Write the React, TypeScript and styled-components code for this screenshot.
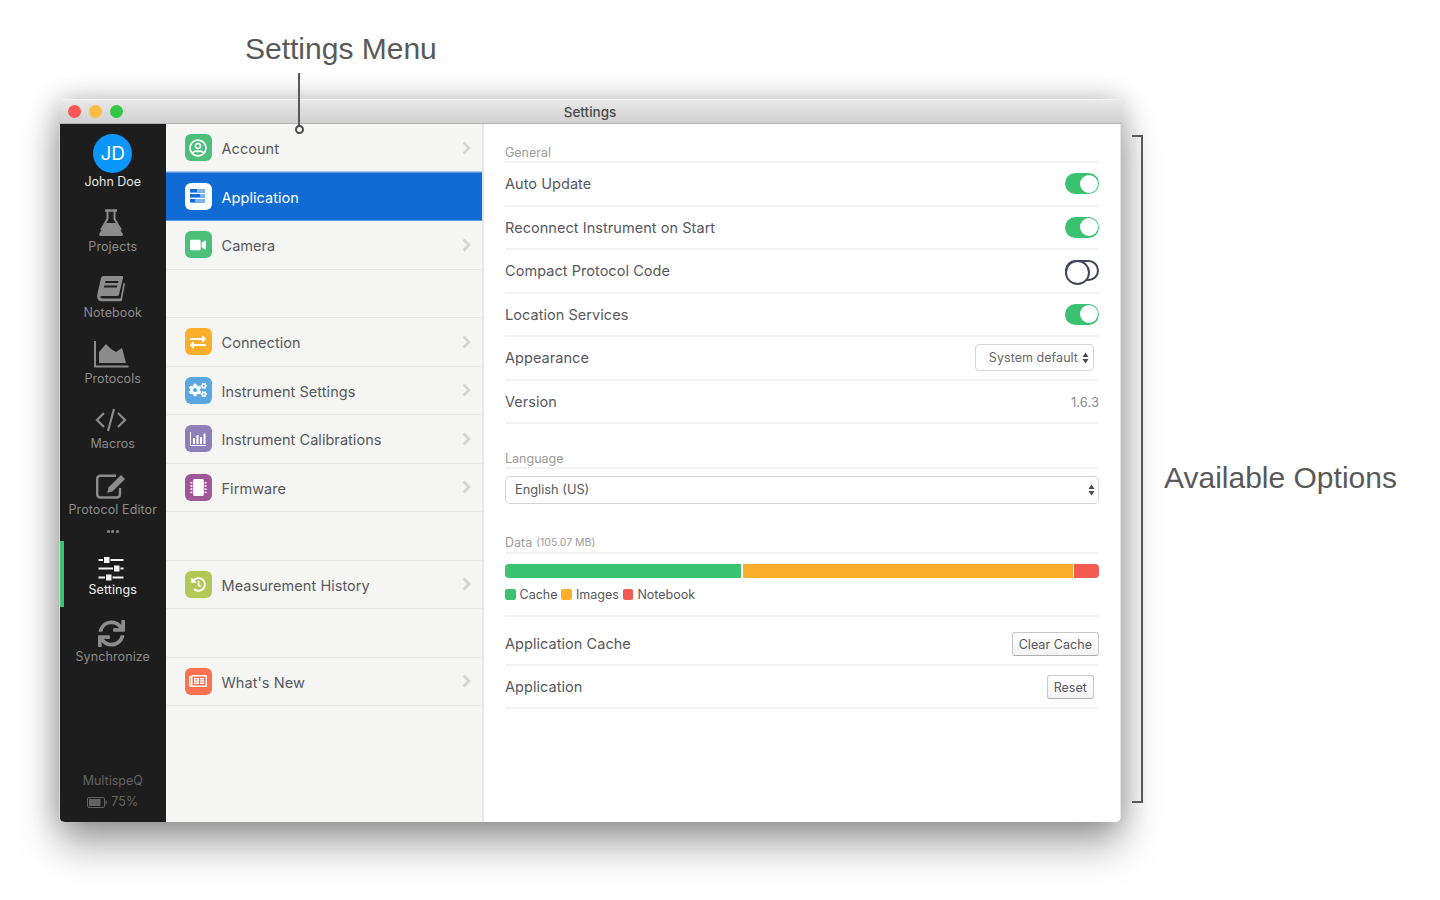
import React from 'react';
import styled, { createGlobalStyle } from 'styled-components';
import { FaSync, FaVideo, FaExchangeAlt, FaCogs, FaMicrochip, FaHistory, FaRegNewspaper, FaRegUserCircle } from 'react-icons/fa';

const Global = createGlobalStyle`
  html, body { margin: 0; padding: 0; background: #fff; }
  body { font-family: Inter, "Noto Sans", sans-serif; overflow: hidden; }
  * { box-sizing: border-box; }
`;

const Page = styled.div`
  position: relative;
  width: 1440px;
  height: 900px;
  padding: 99px 0 0 59px;
  overflow: hidden;
  background: #fff;
`;

const Callout = styled.div`
  position: absolute;
  font-family: "Liberation Sans", Arial, sans-serif;
  font-size: 30px;
  line-height: 36px;
  color: #58595b;
  white-space: nowrap;
  left: ${p => p.$x}px;
  top: ${p => p.$y}px;
`;

const Leader = styled.div`
  position: absolute;
  left: 298px;
  top: 73px;
  width: 2px;
  height: 53px;
  background: #58595b;
  z-index: 3;
`;

const LeaderDot = styled.div`
  position: absolute;
  left: 294.5px;
  top: 124.5px;
  width: 9px;
  height: 9px;
  border-radius: 50%;
  border: 2px solid #4a4a4a;
  background: #f5f5f4;
  z-index: 3;
`;

const Bracket = styled.div`
  position: absolute;
  left: 1132px;
  top: 135px;
  width: 11px;
  height: 668px;
  border: 2px solid #58595b;
  border-left: none;
`;

const WindowShadow = styled.div`
  width: 1062px;
  height: 723px;
  border-radius: 6px;
  box-shadow: 0 22px 42px rgba(0, 0, 0, 0.36), 0 0 28px rgba(0, 0, 0, 0.22);
`;

const Window = styled.div`
  width: 1062px;
  height: 723px;
  display: flex;
  flex-direction: column;
  border-radius: 6px;
  overflow: hidden;
  background: #fff;
`;

const TitleBar = styled.div`
  height: 25px;
  flex: none;
  position: relative;
  display: flex;
  align-items: center;
  justify-content: center;
  background: linear-gradient(#e9e9e9, #d0d0d0);
  border-top: 1px solid #f2f2f2;
  border-bottom: 1px solid #b4b4b4;
  font-size: 13.5px;
  font-weight: 500;
  color: #4a4a4a;
`;

const Lights = styled.div`
  position: absolute;
  left: 9px;
  top: 5px;
  display: flex;
  gap: 8px;
`;

const Light = styled.span`
  width: 13px;
  height: 13px;
  border-radius: 50%;
  background: ${p => p.$c};
`;

const Body = styled.div`
  flex: 1;
  display: flex;
  min-height: 0;
  border-left: 1px solid #d4d4d4;
  border-right: 1px solid #e4e4e4;
`;

const Sidebar = styled.nav`
  width: 105.5px;
  flex: none;
  background: #1d1d1d;
  display: flex;
  flex-direction: column;
  align-items: stretch;
`;

const Profile = styled.div`
  height: 73px;
  display: flex;
  flex-direction: column;
  align-items: center;
  padding-top: 10px;
  color: #e4e4e4;
  font-size: 12.5px;
  line-height: 16px;
`;

const Avatar = styled.div`
  width: 39px;
  height: 39px;
  border-radius: 50%;
  background: #0a96fa;
  color: #fff;
  font-size: 19px;
  display: flex;
  align-items: center;
  justify-content: center;
  margin-bottom: 1px;
`;

const NavItem = styled.div`
  position: relative;
  height: ${p => (p.$active ? 66 : 65.75)}px;
  display: flex;
  flex-direction: column;
  align-items: center;
  padding-top: ${p => (p.$active ? 14 : 11)}px;
  color: ${p => (p.$active ? '#f2f2f2' : '#8c8c8c')};
  font-size: 12.5px;
  line-height: 16px;
  letter-spacing: 0.1px;
  white-space: nowrap;
  ${p => p.$active && 'border-left: 4px solid #3bc271; padding-right: 4px;'}
`;

const NavIcon = styled.div`
  height: ${p => (p.$active ? 27 : 30)}px;
  display: flex;
  align-items: center;
  justify-content: center;
  margin-bottom: ${p => (p.$active ? 0 : 1)}px;
  margin-left: -3px;
`;

const Dots = styled.div`
  height: 15.25px;
  display: flex;
  gap: 1.5px;
  justify-content: center;
  padding-top: 4px;
`;

const Dot = styled.span`
  width: 3px;
  height: 3px;
  border-radius: 50%;
  background: #8c8c8c;
`;

const Device = styled.div`
  margin-top: auto;
  padding-bottom: 12px;
  display: flex;
  flex-direction: column;
  align-items: center;
  gap: 5px;
  color: #626262;
  font-size: 12.5px;
  line-height: 16px;
`;

const Battery = styled.div`
  display: flex;
  align-items: center;
  gap: 4px;
`;

const Menu = styled.div`
  width: 318.5px;
  flex: none;
  background: #f5f5f4;
  border-right: 2px solid #e6e6e6;
`;

const MenuRow = styled.div`
  height: 48.5px;
  display: flex;
  align-items: center;
  padding: 0 10px 0 19px;
  gap: 10px;
  font-size: 14.5px;
  letter-spacing: 0.05px;
  color: ${p => (p.$active ? '#fff' : '#56585e')};
  background: ${p => (p.$active ? '#106bd4' : 'transparent')};
  border-bottom: 1.5px solid ${p => (p.$active ? '#5a9be4' : '#e6e6e5')};
  ${p => p.$active && 'box-shadow: 0 -1.5px 0 #5a9be4;'}
`;

const MenuSpacer = styled.div`
  height: 48.5px;
  border-bottom: 1.5px solid #e6e6e5;
`;

const Tile = styled.div`
  width: 27px;
  height: 27px;
  flex: none;
  border-radius: 6px;
  background: ${p => p.$c};
  display: flex;
  align-items: center;
  justify-content: center;
  color: #fff;
`;

const MenuLabel = styled.span`
  flex: 1;
  padding-top: 2px;
`;

const Content = styled.main`
  flex: 1;
  padding: 19px 21px 0 21px;
  background: #fff;
`;

const SectionHead = styled.div`
  height: 20px;
  margin-top: ${p => p.$mt || 0}px;
  padding-top: ${p => (p.$mt ? 0 : 1)}px;
  display: flex;
  align-items: center;
  gap: 4px;
  font-size: 12.5px;
  color: #9b9b9b;
  border-bottom: 2px solid #f3f3f3;
`;

const Small = styled.span`
  font-size: 10.5px;
`;

const Row = styled.div`
  height: ${p => p.$h || 43.5}px;
  padding-top: ${p => p.$pt || 0}px;
  display: flex;
  align-items: center;
  justify-content: space-between;
  font-size: 14.5px;
  letter-spacing: 0.05px;
  color: #56585e;
  border-bottom: 2px solid #f3f3f3;
`;

const Toggle = styled.div`
  position: relative;
  width: 34px;
  height: 21px;
  border-radius: 11px;
  background: ${p => (p.$on ? '#3bc271' : '#fff')};
  border: ${p => (p.$on ? 'none' : '2px solid #414758')};
  &::after {
    content: '';
    position: absolute;
    border-radius: 50%;
    background: #fff;
    ${p => p.$on
      ? 'width: 18px; height: 18px; right: 1.5px; top: 1.5px;'
      : 'width: 21px; height: 21px; left: -2px; top: -2px; border: 2px solid #414758;'}
  }
`;

const SmallSelect = styled.div`
  width: 119px;
  height: 27px;
  margin-right: 5px;
  border: 1px solid #d6d6d6;
  border-radius: 4px;
  display: flex;
  align-items: center;
  justify-content: flex-end;
  gap: 4px;
  padding-right: 4px;
  font-size: 12.5px;
  color: #6a6a6a;
  background: #fff;
`;

const Version = styled.span`
  font-size: 13px;
  color: #8e8e8e;
  margin-top: 1px;
`;

const WideSelect = styled.div`
  height: 27.5px;
  margin-top: 7px;
  border: 1.5px solid #d4d4d4;
  border-radius: 5px;
  display: flex;
  align-items: center;
  justify-content: space-between;
  padding: 0 3px 0 9px;
  font-size: 12.8px;
  color: #56585e;
`;

const Bar = styled.div`
  height: 14.5px;
  margin-top: 10px;
  display: flex;
  gap: 1.5px;
  border-radius: 4px;
  overflow: hidden;
`;

const Segment = styled.div`
  height: 100%;
  background: ${p => p.$c};
`;

const Legend = styled.div`
  height: 38.5px;
  padding-top: 8px;
  display: flex;
  align-items: flex-start;
  font-size: 12.5px;
  line-height: 17px;
  color: #56585e;
  border-bottom: 2px solid #f3f3f3;
`;

const LegendItem = styled.span`
  display: flex;
  align-items: center;
  gap: 4px;
  margin-right: 4px;
`;

const Swatch = styled.i`
  width: 10.5px;
  height: 10.5px;
  border-radius: 2px;
  background: ${p => p.$c};
`;

const Button = styled.button`
  font: inherit;
  font-size: 12.5px;
  letter-spacing: 0.05px;
  color: #56585e;
  height: 24px;
  padding: 0 6px;
  margin-top: 2px;
  margin-right: ${p => p.$mr || 0}px;
  border: 1px solid #c8c8c8;
  border-bottom-color: #aeaeae;
  border-radius: 3px;
  background: linear-gradient(#fff, #f3f3f3);
`;

const Chevron = () => (
  <svg width="10" height="14" viewBox="0 0 10 14" fill="none">
    <path d="M1.5 1.5 L7 7 L1.5 12.5" stroke="#d4d4d4" strokeWidth="2.6" />
  </svg>
);

const Updown = () => (
  <svg width="7" height="12" viewBox="0 0 7 12">
    <path d="M3.5 0.5 L6.5 5 H0.5 Z M3.5 11.5 L0.5 7 H6.5 Z" fill="#4a4a4a" />
  </svg>
);

const IconFlask = () => (
  <svg width="26" height="28" viewBox="0 0 26 28" fill="none">
    <path d="M7 1.5 H19" stroke="#8c8c8c" strokeWidth="2.4" />
    <path d="M9.5 2 V10 L3 21 M16.5 2 V10 L23 21" stroke="#8c8c8c" strokeWidth="2" />
    <path d="M8 14 H18 L24.6 24.5 Q25.4 27 23 27 H3 Q0.6 27 1.4 24.5 Z" fill="#8c8c8c" />
  </svg>
);

const IconBook = () => (
  <svg width="30" height="28" viewBox="0 0 30 28" fill="#8c8c8c">
    <path d="M7.5 1 H26 Q27.5 1 27 3 L23 19.5 Q22.6 21 21 21 H6 Q4.2 21 4.4 22.3 Q4.7 23.6 6.5 23.6 H24.5 L27.5 8 L29 8.5 L26 25.2 Q25.8 26.2 24.6 26.2 H6 Q1.5 26.2 1.2 22 Q1 20 1.6 18 L5 3 Q5.5 1 7.5 1 Z" />
    <path d="M9.5 6 H22.5 L22 8 H9 Z M8.3 10.5 H21.3 L20.8 12.5 H7.8 Z" fill="#1d1d1d" />
  </svg>
);

const IconArea = () => (
  <svg width="35" height="27" viewBox="0 0 35 27" fill="#8c8c8c">
    <path d="M1 0 V25.5 H34.5" fill="none" stroke="#8c8c8c" strokeWidth="2" />
    <path d="M5 11 L12 3 L17 8 L22 11 L28 7 L32 22 H5 Z" />
  </svg>
);

const IconCode = () => (
  <svg width="32" height="24" viewBox="0 0 32 24" fill="none" stroke="#8c8c8c" strokeWidth="2.2">
    <path d="M9 5 L2 12 L9 19 M23 5 L30 12 L23 19 M19 1 L13 23" />
  </svg>
);

const IconEdit = () => (
  <svg width="30" height="26" viewBox="0 0 30 26" fill="none">
    <path d="M24 15 V21 Q24 24.5 20.5 24.5 H4.5 Q1.2 24.5 1.2 21 V6 Q1.2 2.7 4.5 2.7 H20" stroke="#8c8c8c" strokeWidth="2.4" />
    <path d="M25 1.5 L29.5 6 L16.5 19 L10.5 20.5 L12 14.5 Z" fill="#8c8c8c" stroke="#1d1d1d" strokeWidth="1" />
  </svg>
);

const IconSliders = () => (
  <svg width="26" height="26" viewBox="0 0 26 26" fill="#f2f2f2">
    <rect x="0.5" y="3" width="25" height="2" />
    <rect x="0.5" y="11.5" width="25" height="2" />
    <rect x="0.5" y="20.5" width="25" height="2" />
    <rect x="5.5" y="0.5" width="6.5" height="7" stroke="#1d1d1d" />
    <rect x="15.5" y="9" width="6.5" height="7" stroke="#1d1d1d" />
    <rect x="7.5" y="18" width="6.5" height="7" stroke="#1d1d1d" />
  </svg>
);

const IconApp = () => (
  <svg width="18" height="16" viewBox="0 0 18 16" fill="#106bd4">
    <rect x="1" y="1" width="15" height="3.6" />
    <rect x="1" y="6" width="15" height="3.6" />
    <rect x="1" y="11" width="15" height="3.6" />
    <rect x="8" y="1" width="8" height="3.6" fill="#7fb1ea" />
    <rect x="11" y="6" width="5" height="3.6" fill="#7fb1ea" />
    <rect x="6" y="11" width="10" height="3.6" fill="#7fb1ea" />
  </svg>
);

const IconBars = () => (
  <svg width="18" height="16" viewBox="0 0 18 16" fill="#fff">
    <path d="M1 1 H2 V14 H17 V15 H1 Z" />
    <rect x="4" y="7" width="2" height="6" />
    <rect x="7.5" y="4" width="2" height="9" />
    <rect x="11" y="6" width="2" height="7" />
    <rect x="14.5" y="2.5" width="2" height="10.5" />
  </svg>
);

const IconBattery = () => (
  <svg width="20" height="11" viewBox="0 0 20 11" fill="none">
    <rect x="0.5" y="0.5" width="17" height="10" rx="1.5" stroke="#626262" />
    <rect x="2" y="2" width="11.5" height="7" fill="#626262" />
    <rect x="18.5" y="3.5" width="1.2" height="4" fill="#626262" />
  </svg>
);

const nav1 = [
  { label: 'Projects', icon: <IconFlask /> },
  { label: 'Notebook', icon: <IconBook /> },
  { label: 'Protocols', icon: <IconArea /> },
  { label: 'Macros', icon: <IconCode /> },
  { label: 'Protocol Editor', icon: <IconEdit /> },
];

const menu: ({ label: string; color: string; icon: React.ReactNode; active?: boolean } | null)[] = [
  { label: 'Account', color: '#4cbf7b', icon: <FaRegUserCircle size={18} /> },
  { label: 'Application', color: '#fff', icon: <IconApp />, active: true },
  { label: 'Camera', color: '#4cbf7b', icon: <FaVideo size={16} /> },
  null,
  { label: 'Connection', color: '#fbae2c', icon: <FaExchangeAlt size={16} /> },
  { label: 'Instrument Settings', color: '#5aa7e0', icon: <FaCogs size={18} /> },
  { label: 'Instrument Calibrations', color: '#8f7fb9', icon: <IconBars /> },
  { label: 'Firmware', color: '#a2569a', icon: <FaMicrochip size={17} /> },
  null,
  { label: 'Measurement History', color: '#b3c957', icon: <FaHistory size={15} /> },
  null,
  { label: "What's New", color: '#fc7150', icon: <FaRegNewspaper size={18} /> },
];

const toggles = [
  { label: 'Auto Update', on: true },
  { label: 'Reconnect Instrument on Start', on: true },
  { label: 'Compact Protocol Code', on: false },
  { label: 'Location Services', on: true },
];

export default function App() {
  return (
    <Page>
      <Global />
      <Callout $x={245} $y={31}>Settings Menu</Callout>
      <Callout $x={1164} $y={460}>Available Options</Callout>
      <Leader />
      <LeaderDot />
      <Bracket />
      <WindowShadow>
        <Window>
          <TitleBar>
            <Lights>
              <Light $c="#fc5753" />
              <Light $c="#fdbc40" />
              <Light $c="#33c748" />
            </Lights>
            Settings
          </TitleBar>
          <Body>
            <Sidebar>
              <Profile>
                <Avatar>JD</Avatar>
                John Doe
              </Profile>
              {nav1.map(n => (
                <NavItem key={n.label}>
                  <NavIcon>{n.icon}</NavIcon>
                  {n.label}
                </NavItem>
              ))}
              <Dots><Dot /><Dot /><Dot /></Dots>
              <NavItem $active>
                <NavIcon $active><IconSliders /></NavIcon>
                Settings
              </NavItem>
              <NavItem>
                <NavIcon><FaSync size={27} color="#8c8c8c" /></NavIcon>
                Synchronize
              </NavItem>
              <Device>
                MultispeQ
                <Battery><IconBattery />75%</Battery>
              </Device>
            </Sidebar>
            <Menu>
              {menu.map((m, i) =>
                m ? (
                  <MenuRow key={m.label} $active={m.active}>
                    <Tile $c={m.color}>{m.icon}</Tile>
                    <MenuLabel>{m.label}</MenuLabel>
                    {!m.active && <Chevron />}
                  </MenuRow>
                ) : (
                  <MenuSpacer key={i} />
                )
              )}
            </Menu>
            <Content>
              <SectionHead>General</SectionHead>
              {toggles.map(t => (
                <Row key={t.label}>
                  {t.label}
                  <Toggle $on={t.on} />
                </Row>
              ))}
              <Row>
                Appearance
                <SmallSelect>System default <Updown /></SmallSelect>
              </Row>
              <Row>
                Version
                <Version>1.6.3</Version>
              </Row>
              <SectionHead $mt={25}>Language</SectionHead>
              <WideSelect>English (US) <Updown /></WideSelect>
              <SectionHead $mt={30}>Data <Small>(105.07 MB)</Small></SectionHead>
              <Bar>
                <Segment $c="#3bc271" style={{ width: 236 }} />
                <Segment $c="#fbae2c" style={{ width: 330 }} />
                <Segment $c="#f25c50" style={{ flex: 1 }} />
              </Bar>
              <Legend>
                <LegendItem><Swatch $c="#3bc271" />Cache</LegendItem>
                <LegendItem><Swatch $c="#fbae2c" />Images</LegendItem>
                <LegendItem><Swatch $c="#f25c50" />Notebook</LegendItem>
              </Legend>
              <Row $h={49} $pt={6}>
                Application Cache
                <Button>Clear Cache</Button>
              </Row>
              <Row>
                Application
                <Button $mr={5}>Reset</Button>
              </Row>
            </Content>
          </Body>
        </Window>
      </WindowShadow>
    </Page>
  );
}
